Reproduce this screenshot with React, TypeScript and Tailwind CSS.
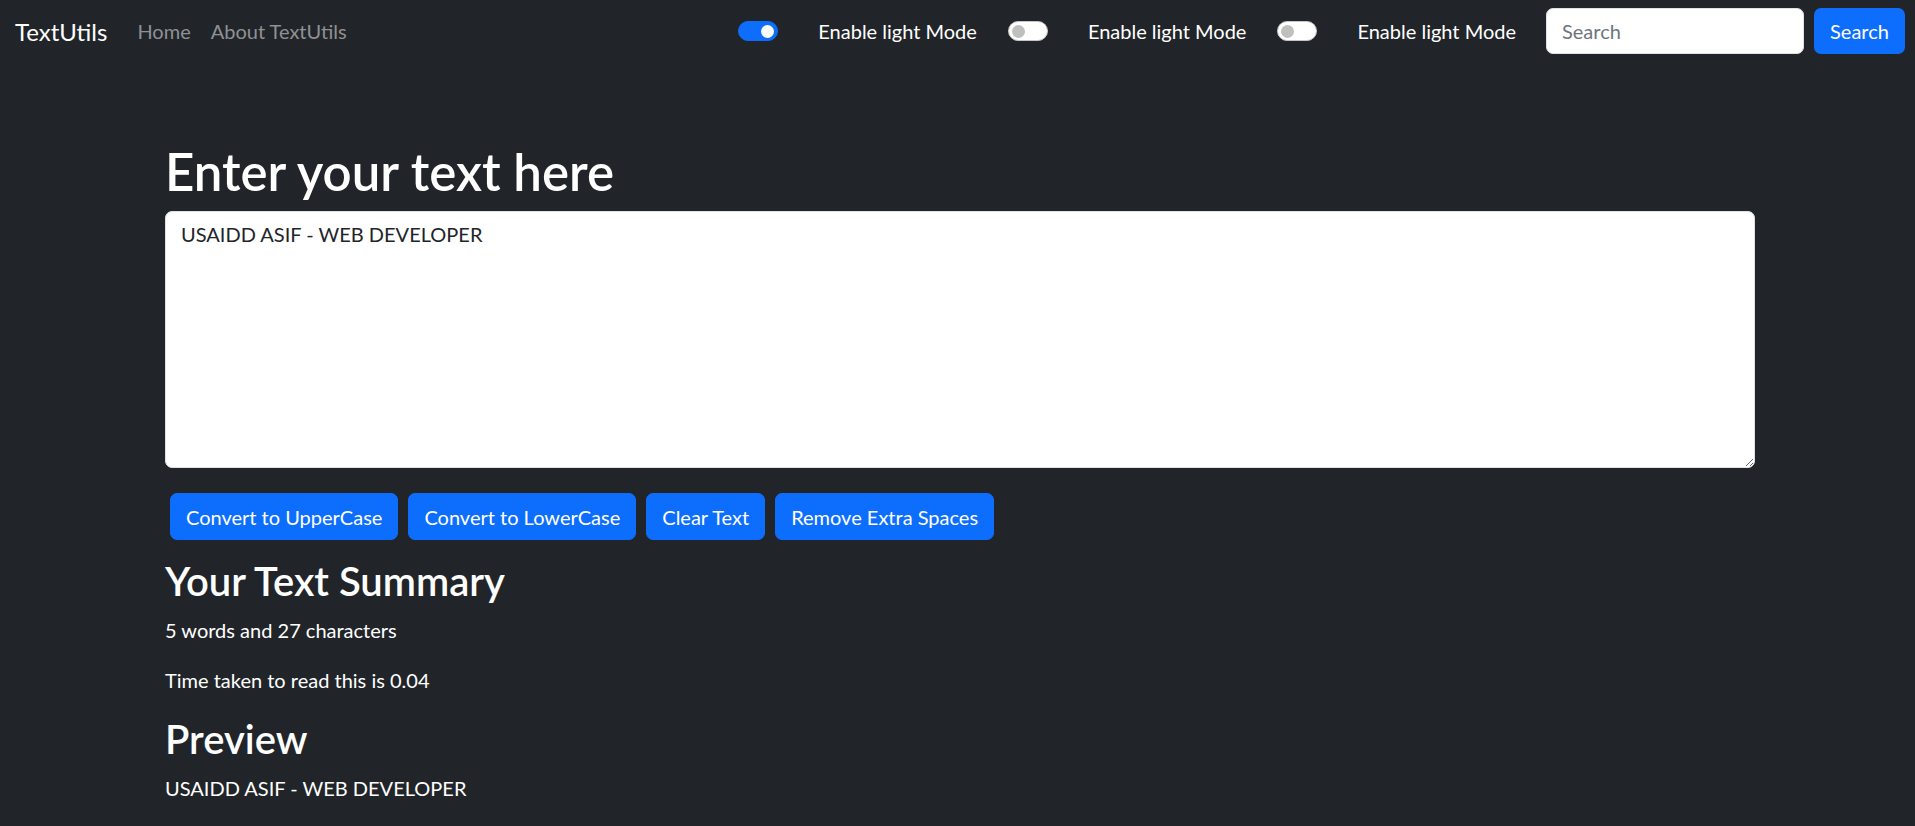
import { useState } from "react";

const Toggle = ({ on }: { on?: boolean }) => (
  <span
    className={
      on
        ? "flex items-center justify-end w-[40px] h-[20px] rounded-full bg-[#0d6efd] border border-[#0d6efd] px-[3px]"
        : "flex items-center justify-start w-[40px] h-[20px] rounded-full bg-white border border-[#c4c6c8] px-[3px]"
    }
  >
    <span className={on ? "w-[13px] h-[13px] rounded-full bg-white" : "w-[13px] h-[13px] rounded-full bg-[#bfbfbf]"} />
  </span>
);

const ModeSwitch = ({ on }: { on?: boolean }) => (
  <div className="flex items-center gap-[40px]">
    <Toggle on={on} />
    <label className="text-[20px] leading-[30px] text-white">Enable light Mode</label>
  </div>
);

const buttons = ["Convert to UpperCase", "Convert to LowerCase", "Clear Text", "Remove Extra Spaces"];

export default function App() {
  const [text, setText] = useState("USAIDD ASIF - WEB DEVELOPER");
  const words = text.split(/\s+/).filter((w) => w.length > 0).length;

  return (
    <div className="min-h-screen bg-[#212529] text-white font-['Segoe_UI','Lato',sans-serif]">
      {/* Navbar */}
      <nav className="flex items-center h-[62px] pl-[15px] pr-[10px]">
        <span className="text-[24px] leading-[37px] text-white mr-[20px]">TextUtils</span>
        <a className="px-[10px] text-[20px] leading-[30px] text-[#8f9193]" href="#">
          Home
        </a>
        <a className="px-[10px] text-[20px] leading-[30px] text-[#8f9193]" href="#">
          About TextUtils
        </a>
        <div className="ml-auto flex items-center gap-[31px]">
          <ModeSwitch on />
          <ModeSwitch />
          <ModeSwitch />
        </div>
        <form className="flex items-center gap-[10px] ml-[30px]" onSubmit={(e) => e.preventDefault()}>
          <input
            className="w-[258px] h-[46px] rounded-[7px] bg-white border border-[#dee2e6] px-[15px] text-[20px] text-[#212529] placeholder:text-[#6c757d] outline-none"
            placeholder="Search"
          />
          <button className="w-[91px] h-[46px] rounded-[7px] bg-[#0d6efd] text-[20px] text-white">Search</button>
        </form>
      </nav>

      {/* Main */}
      <main className="w-[1590px] ml-[165px] pt-[80px]">
        <h1 className="text-[51px] leading-[60px] font-semibold mb-[9px]">Enter your text here</h1>
        <textarea
          className="block w-full h-[257px] rounded-[7px] bg-white border border-[#dee2e6] px-[15px] py-[7px] text-[20px] leading-[30px] text-[#212529] outline-none"
          value={text}
          onChange={(e) => setText(e.target.value)}
        />
        <div className="flex mt-[25px]">
          {buttons.map((b) => (
            <button
              key={b}
              className="mx-[5px] h-[47px] px-[15px] rounded-[7px] bg-[#0d6efd] border border-[#0d6efd] text-[20px] leading-[30px] text-white"
            >
              {b}
            </button>
          ))}
        </div>

        <h2 className="mt-[17px] text-[40px] leading-[48px] font-semibold mb-[10px]">Your Text Summary</h2>
        <p className="text-[20px] leading-[30px] mb-[20px]">
          {words} words and {text.length} characters
        </p>
        <p className="text-[20px] leading-[30px] mb-[20px]">Time taken to read this is {(0.008 * words).toFixed(2)}</p>
        <h2 className="text-[40px] leading-[48px] font-semibold mb-[10px]">Preview</h2>
        <p className="text-[20px] leading-[30px]">{text}</p>
      </main>
    </div>
  );
}
